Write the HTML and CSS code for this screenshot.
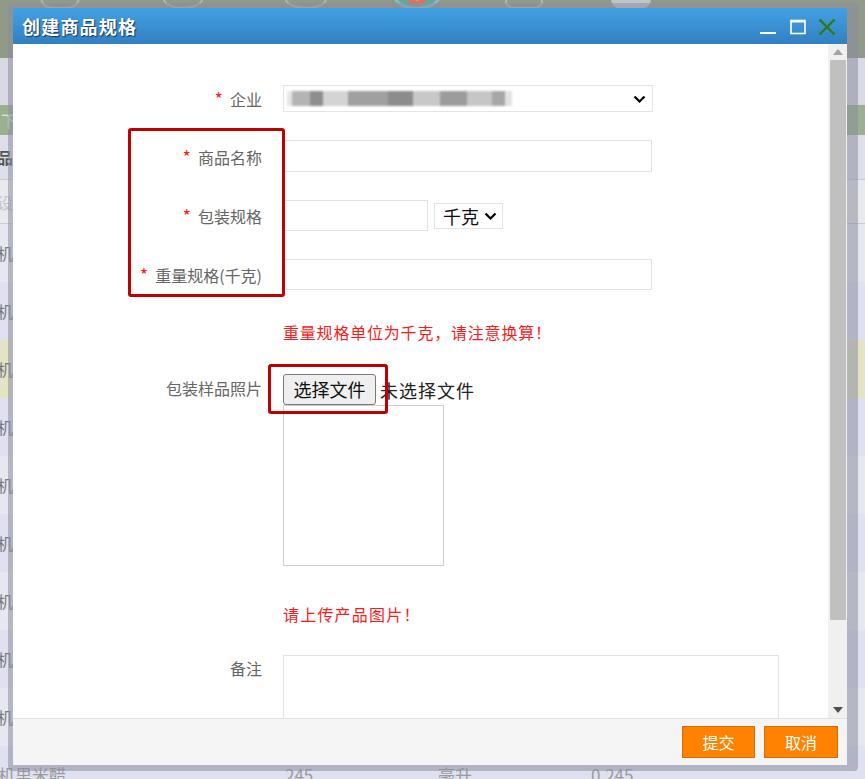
FILE: index.html
```html
<!DOCTYPE html>
<html lang="zh-CN">
<head>
<meta charset="utf-8">
<title>创建商品规格</title>
<link rel="stylesheet" href="styles.css">
</head>
<body>
<div class="page">
  <div class="topband">
    <span class="ticon t1"></span>
    <span class="ticon t2"></span>
    <span class="ticon t3"></span>
    <span class="ticon t4"></span>
    <span class="ticon t5"></span>
    <span class="ticon t6"></span>
  </div>
  <div class="prow r-a"></div>
  <div class="prow r-green"><span class="ptxt light">下</span></div>
  <div class="prow r-b"><span class="ptxt dark">品</span></div>
  <div class="prow r-c"><span class="ptxt faint">设</span></div>
  <div class="prow r-d"><span class="ptxt">机</span></div>
  <div class="prow r-e"><span class="ptxt">机</span></div>
  <div class="prow r-y"><span class="ptxt">机</span></div>
  <div class="prow r-e"><span class="ptxt">机</span></div>
  <div class="prow r-d"><span class="ptxt">机</span></div>
  <div class="prow r-e"><span class="ptxt">机</span></div>
  <div class="prow r-d"><span class="ptxt">机</span></div>
  <div class="prow r-e"><span class="ptxt">机</span></div>
  <div class="prow r-d"><span class="ptxt">机</span></div>
  <div class="prow r-last">
    <span class="c1">机里米醋</span><span class="c2">245</span><span class="c3">毫升</span><span class="c4">0.245</span>
  </div>
</div>

<div class="dialog">
  <div class="dinner">
    <div class="dhead">
      <span class="dtitle">创建商品规格</span>
      <div class="dtools">
        <svg class="tmin" width="16" height="4" viewBox="0 0 16 4"><rect x="0" y="1" width="16" height="2" fill="#fff"/></svg>
        <svg class="tmax" width="16" height="16" viewBox="0 0 16 16"><rect x="1" y="1.5" width="14" height="13" fill="none" stroke="#fff" stroke-width="1.6"/><rect x="1" y="1" width="14" height="2.5" fill="#fff"/></svg>
        <svg class="tclose" width="18" height="18" viewBox="0 0 18 18"><path d="M1.5 1.5 L16.5 16.5 M16.5 1.5 L1.5 16.5" stroke="#2f7a12" stroke-width="2.4" fill="none"/></svg>
      </div>
    </div>
    <div class="dmain">
      <div class="dcontent">
        <div class="frow r1">
          <div class="flabel"><span class="req">*</span>企业</div>
          <div class="sel sel-wide">
            <div class="blur"></div>
            <svg class="chev" width="13" height="8" viewBox="0 0 13 8"><path d="M1.5 1.5 L6.5 6.5 L11.5 1.5" stroke="#000" stroke-width="2.2" fill="none"/></svg>
          </div>
        </div>
        <div class="frow r2">
          <div class="flabel"><span class="req">*</span>商品名称</div>
          <div class="inp w-full h32"></div>
        </div>
        <div class="frow r3">
          <div class="flabel"><span class="req">*</span>包装规格</div>
          <div class="inp w-short h31"></div>
          <div class="sel sel-unit">
            <span class="unit">千克</span>
            <svg class="chev" width="13" height="8" viewBox="0 0 13 8"><path d="M1.5 1.5 L6.5 6.5 L11.5 1.5" stroke="#000" stroke-width="2.2" fill="none"/></svg>
          </div>
        </div>
        <div class="frow r4">
          <div class="flabel"><span class="req">*</span>重量规格(千克)</div>
          <div class="inp w-full h31"></div>
        </div>
        <div class="hint h1">重量规格单位为千克，请注意换算！</div>
        <div class="frow top r5">
          <div class="flabel pt5">包装样品照片</div>
          <div class="fctl">
            <div class="fileline">
              <span class="filebtn">选择文件</span><span class="nofile">未选择文件</span>
            </div>
            <div class="preview"></div>
          </div>
        </div>
        <div class="hint h2">请上传产品图片！</div>
        <div class="frow top r6">
          <div class="flabel pt3">备注</div>
          <div class="textarea"></div>
        </div>
        <div class="mark m1"></div>
        <div class="mark m2"></div>
      </div>
      <div class="sbar">
        <div class="sarrow"><svg width="10" height="6" viewBox="0 0 10 6"><path d="M0 6 L5 0 L10 6 Z" fill="#a3a3a3"/></svg></div>
        <div class="sthumb"></div>
        <div class="strack"></div>
        <div class="sarrow"><svg width="10" height="6" viewBox="0 0 10 6"><path d="M0 0 L10 0 L5 6 Z" fill="#505050"/></svg></div>
      </div>
    </div>
    <div class="dfoot">
      <span class="obtn b1">提交</span>
      <span class="obtn b2">取消</span>
    </div>
  </div>
</div>
</body>
</html>
```

FILE: styles.css
```css
* { box-sizing: border-box; }
html, body { margin: 0; padding: 0; }
body {
  width: 865px;
  height: 779px;
  overflow: hidden;
  position: relative;
  font-family: "Noto Sans CJK SC", "Noto Sans", sans-serif;
  background: #dfe1ee;
}

/* ---------- background page ---------- */
.page { width: 865px; }
.topband {
  height: 58px;
  background: #8f9a88;
  display: flex;
  align-items: flex-start;
  overflow: hidden;
}
.ticon {
  display: block;
  flex: none;
  height: 20px;
  margin-top: -11px;
  border: 2px solid rgba(190, 196, 190, 0.7);
  border-radius: 0 0 12px 12px;
}
.t1 { margin-left: 40px; width: 40px; }
.t2 { margin-left: 83px; width: 40px; border-radius: 50%; border-top-color: transparent; }
.t3 { margin-left: 82px; width: 42px; border-radius: 50%; }
.t4 {
  margin-left: 66px; width: 48px; height: 30px; margin-top: -20px;
  border: 3px solid #86bcc4; border-radius: 50%;
  background: radial-gradient(circle at 50% 45%, #e9e6dc 0 6px, #d9735a 7px 11px, #62a89c 12px 100%);
}
.t5 { margin-left: 64px; width: 38px; border-radius: 8px; }
.t6 { margin-left: 68px; width: 40px; background: rgba(200, 204, 214, 0.85); border-radius: 0 0 10px 10px; }

.prow {
  display: flex;
  align-items: center;
  overflow: hidden;
}
.ptxt {
  margin-left: -3px;
  font-size: 16px;
  line-height: 20px;
  color: #7a7a7a;
}
.ptxt.light { color: #dfe8d8; margin-left: 1px; }
.ptxt.dark { color: #555; font-weight: bold; }
.ptxt.faint { color: #c2c4cc; }
.r-a { height: 47px; background: #d7d9e4; }
.r-green { height: 30px; background: #9bb08e; }
.r-b { height: 45px; background: #dde0ea; border-bottom: 1px solid #c8cad4; }
.r-c { height: 44px; background: #e9eaf0; border-bottom: 1px solid #c8cad4; }
.r-d { height: 58px; background: #e6e8f0; }
.r-e { height: 58px; background: #dfe1f1; }
.r-y { height: 58px; background: #e5e3c4; }
.r-last {
  height: 58px;
  background: #dfe1f1;
  align-items: flex-start;
  padding-top: 19px;
  font-size: 17px;
  line-height: 20px;
  color: #9a9a9a;
}
.r-last span { flex: none; }
.c1 { width: 287px; margin-left: -2px; }
.c2 { width: 153px; }
.c3 { width: 153px; }

/* ---------- dialog ---------- */
.dialog {
  position: absolute;
  left: 8px;
  top: 3px;
  width: 850px;
  height: 768px;
  border-style: solid;
  border-color: rgba(140, 142, 160, 0.55);
  border-width: 5px 11px 6px 5px;
  border-radius: 4px;
}
.dinner {
  width: 834px;
  height: 757px;
  display: flex;
  flex-direction: column;
  background: #fff;
}
.dhead {
  height: 36px;
  flex: none;
  display: flex;
  align-items: center;
  padding-left: 9px;
  background: linear-gradient(#43a1e3, #3180c2);
}
.dtitle {
  color: #fff;
  font-size: 18px;
  font-weight: bold;
  letter-spacing: 1.2px;
  line-height: 22px;
  text-shadow: 1px 1px 1px #1b3550;
}
.dtools {
  margin-left: auto;
  display: flex;
  align-items: center;
  padding-right: 11px;
}
.tmin { margin-top: 14px; }
.tmax { margin-left: 14px; margin-top: 2px; }
.tclose { margin-left: 12px; margin-top: 2px; }

.dmain {
  height: 674px;
  flex: none;
  display: flex;
}
.dcontent {
  width: 815px;
  height: 674px;
  position: relative;
  overflow: hidden;
  padding-top: 41px;
}
.frow {
  display: flex;
  align-items: center;
}
.frow.top { align-items: flex-start; }
.flabel {
  flex: none;
  width: 270px;
  padding-right: 21px;
  text-align: right;
  font-size: 16px;
  line-height: 20px;
  color: #666;
  white-space: nowrap;
}
.flabel.pt5 { padding-top: 4px; }
.flabel.pt3 { padding-top: 3px; }
.req {
  color: #ff1a1a;
  margin-right: 7px;
  font-size: 18px;
}
.r2 { margin-top: 28px; }
.r3 { margin-top: 28px; }
.r4 { margin-top: 28px; }

.inp {
  background: #fff;
  border: 1px solid #e2e2e2;
}
.w-full { width: 369px; }
.w-short { width: 145px; }
.h32 { height: 32px; }
.h31 { height: 31px; }

.sel {
  display: flex;
  align-items: center;
  background: #fff;
  border: 1px solid #e4e4e4;
}
.sel-wide {
  width: 370px;
  height: 27px;
  padding: 0 6px 0 3px;
}
.blur {
  width: 225px;
  height: 15px;
  filter: blur(1px);
  background: linear-gradient(90deg,
    #e6e6e6 0 5px, #b4b4b4 5px 23px, #8e8e8e 23px 36px, #d4d4d4 36px 61px,
    #a0a0a0 61px 101px, #8c8c8c 101px 126px, #c8c8c8 126px 153px,
    #9c9c9c 153px 180px, #c6c6c6 180px 205px, #a6a6a6 205px 218px, #e2e2e2 218px 225px);
}
.sel-wide .chev { margin-left: auto; }
.sel-unit {
  width: 69px;
  height: 26px;
  margin-left: 6px;
  padding: 0 5px 0 8px;
}
.unit {
  font-size: 18px;
  line-height: 22px;
  color: #111;
}
.sel-unit .chev { margin-left: auto; }

.hint {
  margin-left: 270px;
  font-size: 16px;
  line-height: 20px;
  color: #ff1a1a;
  letter-spacing: 0.8px;
}
.h1 { margin-top: 32px; }
.r5 { margin-top: 32px; }
.h2 { margin-top: 38px; letter-spacing: 1.2px; }
.r6 { margin-top: 31px; }

.fctl { display: flex; flex-direction: column; }
.fileline { display: flex; align-items: center; height: 31px; }
.filebtn {
  width: 93px;
  height: 31px;
  border: 1px solid #7a7a7a;
  border-radius: 3px;
  background: #efefef;
  font-size: 18px;
  line-height: 28px;
  text-align: center;
  color: #111;
}
.nofile {
  margin-left: 4px;
  font-size: 18px;
  line-height: 22px;
  color: #222;
  letter-spacing: 1px;
}
.preview {
  width: 161px;
  height: 161px;
  border: 1px solid #cfcfcf;
}
.textarea {
  width: 496px;
  height: 120px;
  border: 1px solid #e2e2e2;
  background: #fff;
}

.mark {
  position: absolute;
  border: 3px solid #c20000;
  border-radius: 3px;
}
.m1 { left: 115px; top: 84px; width: 157px; height: 169px; }
.m2 { left: 255px; top: 320px; width: 120px; height: 50px; }

.sbar {
  width: 19px;
  height: 674px;
  flex: none;
  background: #f0f0f0;
  display: flex;
  flex-direction: column;
}
.sarrow {
  height: 16px;
  flex: none;
  display: flex;
  align-items: center;
  justify-content: center;
}
.sthumb {
  height: 560px;
  flex: none;
  margin: 0 1px 0 2px;
  background: #c0c0c0;
}
.strack { flex: 1; }

.dfoot {
  height: 47px;
  flex: none;
  background: #f5f5f5;
  border-top: 1px solid #e0e0e0;
  display: flex;
  justify-content: flex-end;
  align-items: flex-start;
  gap: 9px;
  padding: 7px 9px 0 0;
}
.obtn {
  height: 32px;
  background: #ff8300;
  border: 1px solid #d96d00;
  color: #fff;
  font-size: 16px;
  line-height: 30px;
  text-align: center;
}
.b1 { width: 73px; }
.b2 { width: 74px; }
```
